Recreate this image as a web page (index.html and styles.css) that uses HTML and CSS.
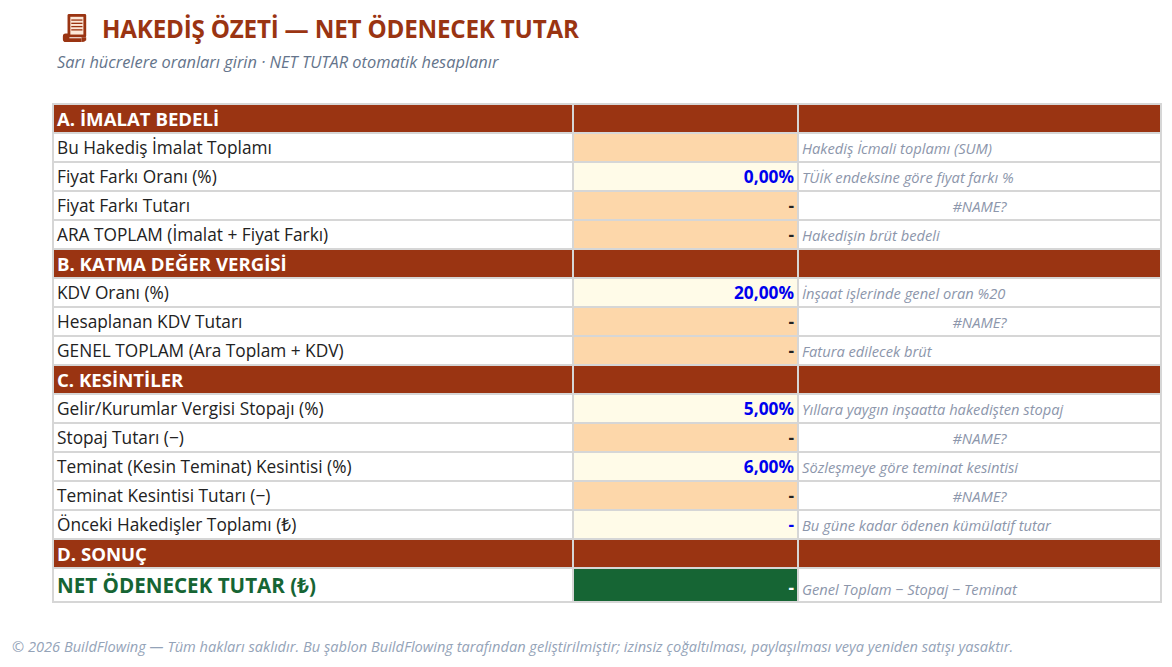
FILE: index.html
```html
<!DOCTYPE html>
<html lang="tr">
<head>
<meta charset="utf-8">
<title>Hakediş Özeti</title>
<link rel="stylesheet" href="styles.css">
</head>
<body>
<div class="page">
  <header class="head">
    <h1 class="title">
      <svg class="icon" viewBox="0 0 30 32" width="28" height="30" aria-hidden="true">
        <rect x="7" y="1" width="20" height="25" rx="1.5" fill="#9a3412"/>
        <rect x="10" y="4" width="14" height="19" fill="#fde8d8"/>
        <g stroke="#9a3412" stroke-width="1.4">
          <line x1="11" y1="7.5" x2="23" y2="7.5"/>
          <line x1="11" y1="11" x2="23" y2="11"/>
          <line x1="11" y1="14.5" x2="23" y2="14.5"/>
          <line x1="11" y1="18" x2="23" y2="18"/>
        </g>
        <path d="M2 25 Q2 22 5 22 L9 22 L9 27 L22 27 L22 31 L5 31 Q2 31 2 28 Z" fill="#9a3412"/>
        <path d="M22 26 L27 26 L27 29 Q25 31 22 31 Z" fill="#9a3412"/>
      </svg>
      <span>HAKEDİŞ ÖZETİ — NET ÖDENECEK TUTAR</span>
    </h1>
    <p class="subtitle">Sarı hücrelere oranları girin · NET TUTAR otomatik hesaplanır</p>
  </header>

  <table class="sheet">
    <colgroup>
      <col class="c1"><col class="c2"><col class="c3">
    </colgroup>
    <tbody>
      <tr class="sec"><td>A. İMALAT BEDELİ</td><td></td><td></td></tr>
      <tr><td>Bu Hakediş İmalat Toplamı</td><td class="calc"></td><td class="note">Hakediş İcmali toplamı (SUM)</td></tr>
      <tr><td>Fiyat Farkı Oranı (%)</td><td class="input">0,00%</td><td class="note">TÜİK endeksine göre fiyat farkı %</td></tr>
      <tr><td>Fiyat Farkı Tutarı</td><td class="calc">-</td><td class="note err">#NAME?</td></tr>
      <tr><td>ARA TOPLAM (İmalat + Fiyat Farkı)</td><td class="calc">-</td><td class="note">Hakedişin brüt bedeli</td></tr>
      <tr class="sec"><td>B. KATMA DEĞER VERGİSİ</td><td></td><td></td></tr>
      <tr><td>KDV Oranı (%)</td><td class="input">20,00%</td><td class="note">İnşaat işlerinde genel oran %20</td></tr>
      <tr><td>Hesaplanan KDV Tutarı</td><td class="calc">-</td><td class="note err">#NAME?</td></tr>
      <tr><td>GENEL TOPLAM (Ara Toplam + KDV)</td><td class="calc">-</td><td class="note">Fatura edilecek brüt</td></tr>
      <tr class="sec"><td>C. KESİNTİLER</td><td></td><td></td></tr>
      <tr><td>Gelir/Kurumlar Vergisi Stopajı (%)</td><td class="input">5,00%</td><td class="note">Yıllara yaygın inşaatta hakedişten stopaj</td></tr>
      <tr><td>Stopaj Tutarı (−)</td><td class="calc">-</td><td class="note err">#NAME?</td></tr>
      <tr><td>Teminat (Kesin Teminat) Kesintisi (%)</td><td class="input">6,00%</td><td class="note">Sözleşmeye göre teminat kesintisi</td></tr>
      <tr><td>Teminat Kesintisi Tutarı (−)</td><td class="calc">-</td><td class="note err">#NAME?</td></tr>
      <tr><td>Önceki Hakedişler Toplamı (₺)</td><td class="input">-</td><td class="note">Bu güne kadar ödenen kümülatif tutar</td></tr>
      <tr class="sec"><td>D. SONUÇ</td><td></td><td></td></tr>
      <tr class="total"><td>NET ÖDENECEK TUTAR (₺)</td><td class="result">-</td><td class="note">Genel Toplam − Stopaj − Teminat</td></tr>
    </tbody>
  </table>

  <footer class="foot">© 2026 BuildFlowing — Tüm hakları saklıdır. Bu şablon BuildFlowing tarafından geliştirilmiştir; izinsiz çoğaltılması, paylaşılması veya yeniden satışı yasaktır.</footer>
</div>
</body>
</html>
```

FILE: styles.css
```css
* { box-sizing: border-box; }
html, body { margin: 0; padding: 0; background: #ffffff; }
body { font-family: "Open Sans", "Noto Sans", sans-serif; color: #222; }

.page { width: 1172px; height: 667px; position: relative; }

.head { padding: 8px 0 0 57px; height: 103px; }
.title {
  margin: 0;
  display: flex;
  align-items: center;
  gap: 13px;
  font-size: 24.2px;
  font-weight: 700;
  color: #9a3412;
  letter-spacing: -0.2px;
  height: 40px;
}
.icon { display: block; margin-left: 4px; }
.subtitle {
  margin: 2px 0 0 0;
  font-style: italic;
  font-size: 16.4px;
  color: #64748b;
}

.sheet {
  margin-left: 52px;
  border-collapse: collapse;
  table-layout: fixed;
  width: 1108px;
}
.c1 { width: 520px; }
.c2 { width: 225px; }
.c3 { width: 363px; }

.sheet td {
  border: 2px solid #d6d6d6;
  height: 29px;
  padding: 0 3px 0 3px;
  font-size: 17.3px;
  white-space: nowrap;
  overflow: hidden;
  vertical-align: middle;
  color: #222;
}

.sheet .sec td {
  background: #9a3412;
  color: #fff;
  font-weight: 700;
  font-size: 18.6px;
}

.sheet td.calc { background: #fdd7aa; text-align: right; font-weight: 700; }
.sheet td.input { background: #fffbe8; text-align: right; font-weight: 700; color: #0000ee; }

.sheet td.note {
  font-style: italic;
  font-size: 14.7px;
  color: #8c96ab;
}
.sheet td.err { text-align: center; }

.total td { height: 34px; }
.sheet .total td:first-child {
  font-weight: 700;
  color: #166534;
  font-size: 20.6px;
}
.sheet td.result {
  background: #166534;
  color: #fff;
  text-align: right;
  font-weight: 700;
  vertical-align: bottom;
  padding-bottom: 2px;
}
.sheet .total td.note { vertical-align: bottom; padding-bottom: 2px; }

.foot {
  position: absolute;
  left: 12px;
  top: 636px;
  font-style: italic;
  font-size: 14.6px;
  color: #94a3b8;
  white-space: nowrap;
}
```
